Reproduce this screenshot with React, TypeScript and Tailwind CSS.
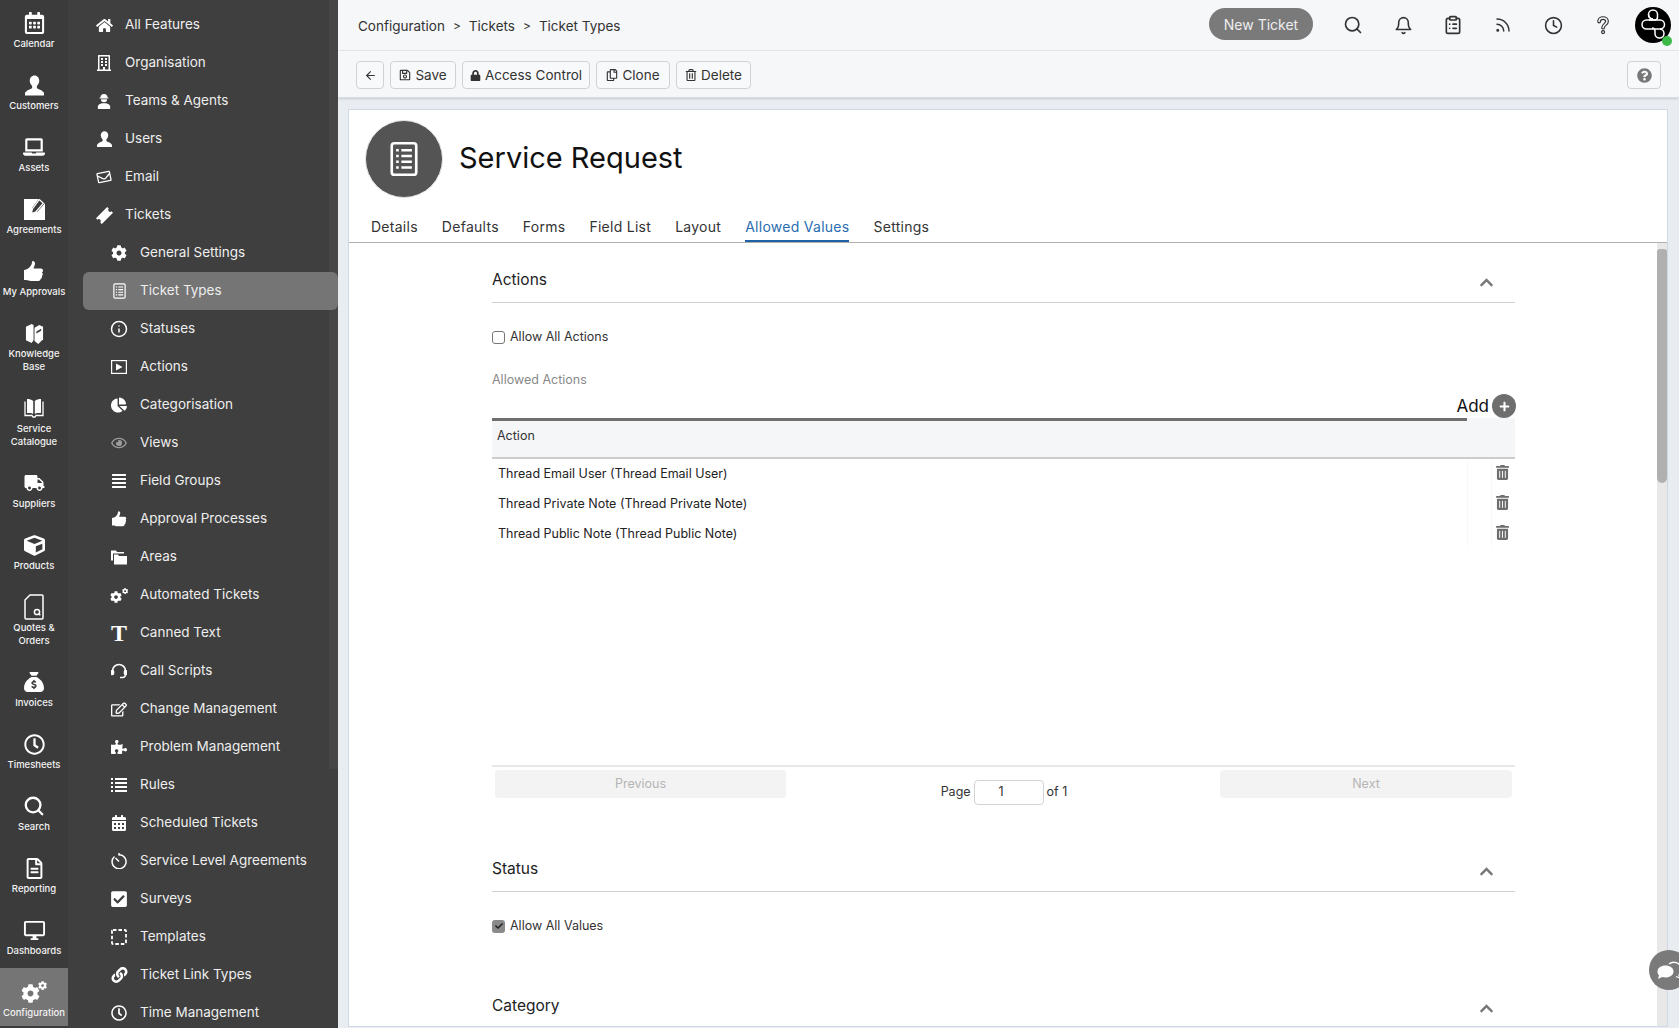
import type { ReactNode } from "react";
import {
  FaCalendarAlt,
  FaChartPie,
  FaCheck,
  FaCheckSquare,
  FaChevronUp,
  FaCog,
  FaAlignJustify,
  FaCube,
  FaHome,
  FaLaptop,
  FaLink,
  FaLock,
  FaPlus,
  FaPuzzlePiece,
  FaQuestionCircle,
  FaRegBuilding,
  FaRegCalendarAlt,
  FaRegClock,
  FaRegCopy,
  FaRegEdit,
  FaRegEnvelope,
  FaRegEye,
  FaRegFileAlt,
  FaRegSave,
  FaTrashAlt,
  FaRegTrashAlt,
  FaTruck,
} from "react-icons/fa";
import { FaSackDollar } from "react-icons/fa6";
import { FiArrowLeft, FiBell, FiClock, FiInfo, FiRss, FiSearch } from "react-icons/fi";
import { LuClipboardList } from "react-icons/lu";
import { MdOutlineDesktopWindows } from "react-icons/md";

const font = { fontFamily: "Inter, 'Noto Sans', sans-serif" };

function GearPair({ big }: { big: number }) {
  return (
    <span className="relative inline-block" style={{ width: big + 4, height: big }}>
      <FaCog className="absolute bottom-0 left-0" style={{ width: big - 3, height: big - 3 }} />
      <FaCog className="absolute right-0 top-0" style={{ width: big / 2.4, height: big / 2.4 }} />
    </span>
  );
}

function ListDoc({ className }: { className: string }) {
  return (
    <svg viewBox="0 0 16 20" className={className} fill="none" stroke="currentColor">
      <rect x="1" y="1" width="14" height="18" rx="1.5" strokeWidth="1.5" />
      <path d="M3.5 5h1.5M6.5 5h6M3.5 8.300h1.500M6.500 8.300h6M3.500 11.600h1.500M6.500 11.600h6M3.500 14.900h1.500M6.500 14.900h6" strokeWidth="1.400" />
    </svg>
  );
}

function BustIcon({ className }: { className: string }) {
  return (
    <svg viewBox="0 0 20 21" className={className} fill="currentColor">
      <path d="M10 0c3 0 5 2.500 5 5.500 0 2.500-1.500 4.500-2.500 5.500v2c0 1 6.500 2 7.500 5.500v2.500H0v-2.500C1 15 7.500 14 7.500 13v-2C6.500 10 5 8 5 5.500 5 2.500 7 0 10 0z" />
    </svg>
  );
}

function ThumbIcon({ className }: { className: string }) {
  return (
    <svg viewBox="0 0 20 21" className={className} fill="currentColor">
      <path d="M9 0c1 0 2 1 2 2.500 0 2-1.500 4-1.500 5h7.500c1.200 0 2 1 2 2s-.5 1.500-1 2c.5.500.8 1 .8 1.800 0 .8-.5 1.400-1 1.700.3.500.4 1 .2 1.600-.2.600-.7 1-1.300 1.200 0 1.200-1 2.200-2.300 2.200H7c-2 0-3-1-5-1H0V9c3.500 0 8-4 8-8 0-.5.5-1 1-1z" />
    </svg>
  );
}

function AgreementIcon() {
  return (
    <svg viewBox="0 0 20 20" className="h-[21px] w-[21px]">
      <path d="M0 0h14l-6 8-1 6 6-2 7-8v16H0z" fill="currentColor" />
      <path d="M14.500 0.500l4 3.500-7.500 8.500-4 1.500 1-4.500z" fill="none" stroke="currentColor" strokeWidth="1.200" />
    </svg>
  );
}

function BooksIcon() {
  return (
    <svg viewBox="0 0 20 22" className="h-[21px] w-[19px]" fill="currentColor">
      <path d="M1 4l6-3 2 1v16l-2 3-6-3z" />
      <path d="M10 5l5-3 4 2v13l-5 5-4-3z" />
      <path d="M12 9l5-3v2l-5 3z" fill="#3b3b3b" />
    </svg>
  );
}

function OpenBookIcon() {
  return (
    <svg viewBox="0 0 20 20" className="h-[21px] w-[20px]">
      <path d="M1 3v14h7l1 1.500h2l1-1.500h7V3" fill="none" stroke="currentColor" strokeWidth="1.300" />
      <path d="M3 .5c2.500 0 4.500.5 6.200 2v13C7.500 14 5.500 14.500 3 14.500zM17 .5c-2.500 0-4.500.5-6.200 2v13c1.700-1.500 3.700-1 6.200-1z" fill="currentColor" />
    </svg>
  );
}

function QuoteIcon() {
  return (
    <svg viewBox="0 0 20 26" className="h-[26px] w-[20px]" fill="none" stroke="currentColor">
      <path d="M6 1h12a1 1 0 0 1 1 1v22a1 1 0 0 1-1 1H2a1 1 0 0 1-1-1V6z" strokeWidth="1.500" />
      <circle cx="13" cy="18" r="2.600" strokeWidth="1.500" />
      <path d="M14.500 19.500l1.800 1.800" strokeWidth="1.500" />
    </svg>
  );
}

function AgentIcon() {
  return (
    <svg viewBox="0 0 16 18" className="h-[16px] w-[14px]" fill="currentColor">
      <path d="M4 5a4 4 0 0 1 8 0h1v1H3V5z" />
      <path d="M4.500 7h7a3.500 3.500 0 0 1-7 0z" />
      <path d="M1 18v-3c0-2 3-3 4.500-3.500h5C12 12 15 13 15 15v3z" />
    </svg>
  );
}

function TicketIcon() {
  return (
    <svg viewBox="0 0 16 16" className="h-[17px] w-[17px]" fill="currentColor">
      <path d="M0 10.500L10.500 0l1.500 1.500a1.500 1.500 0 0 0 2.500 2.500L16 5.500 5.500 16 4 14.500A1.500 1.500 0 0 0 1.500 12z" />
    </svg>
  );
}

function ActionIcon() {
  return (
    <svg viewBox="0 0 16 14" className="h-[14px] w-[16px]">
      <rect x="0.600" y="0.600" width="14.800" height="12.800" fill="none" stroke="currentColor" strokeWidth="1.200" />
      <path d="M5 3.500l6.500 3.500L5 10.500z" fill="currentColor" />
    </svg>
  );
}

function AreasIcon() {
  return (
    <svg viewBox="0 0 16 14" className="h-[15px] w-[16px]" fill="currentColor">
      <path d="M0 0h5l1 1.500h7V3H2v7H0z" />
      <path d="M3 4h4l1 1.500h8V14H3z" />
    </svg>
  );
}

function HeadsetIcon() {
  return (
    <svg viewBox="0 0 16 16" className="h-[16px] w-[16px]" fill="none" stroke="currentColor" strokeWidth="1.600">
      <path d="M1.500 10V8a6.500 6.500 0 0 1 13 0v3a3 3 0 0 1-3 3.500H9" />
      <rect x="0.500" y="7.500" width="2" height="4" rx="1" fill="currentColor" />
      <rect x="13.500" y="7.500" width="2" height="4" rx="1" fill="currentColor" />
    </svg>
  );
}

function RulesIcon() {
  return (
    <svg viewBox="0 0 16 14" className="h-[14px] w-[16px]" fill="currentColor">
      <path d="M0 0h2v2H0zM4 0h12v2H4zM0 4h2v2H0zM4 4h12v2H4zM0 8h2v2H0zM4 8h12v2H4zM0 12h2v2H0zM4 12h12v2H4z" />
    </svg>
  );
}

function SlaIcon() {
  return (
    <svg viewBox="0 0 16 16" className="h-[16px] w-[16px]" fill="none" stroke="currentColor" strokeWidth="1.500">
      <path d="M3.500 3.500A7 7 0 1 0 8 1.800" />
      <path d="M8 0v2.500M4.500 5l3.500 3.500" />
    </svg>
  );
}

function DashedIcon() {
  return (
    <svg viewBox="0 0 16 16" className="h-[16px] w-[16px]" fill="none" stroke="currentColor" strokeWidth="1.800">
      <rect x="1" y="1" width="14" height="14" rx="1" strokeDasharray="3.500 2" />
    </svg>
  );
}

// the ? in the top bar is an outlined shape, so it gets a dark and a light stroke
function HollowQuestion() {
  const d = "M7 7.500C7 5 9 3.500 11.500 3.500S16 5 16 7.500c0 3-4.500 3.500-4.500 7";
  return (
    <svg viewBox="0 0 24 24" className="h-[21px] w-[21px]" fill="none" strokeLinecap="round">
      <path d={d} stroke="#333" strokeWidth="4.400" />
      <path d={d} stroke="#f6f7f9" strokeWidth="1.800" />
      <circle cx="11.500" cy="19.500" r="1.700" stroke="#333" strokeWidth="1.400" />
    </svg>
  );
}

function ChatIcon() {
  return (
    <svg viewBox="0 0 28 22" className="h-[22px] w-[28px]">
      <path d="M14 5a7.500 7.500 0 0 1 12 4 7 7 0 0 1-2 7l1 3-4-1.500" fill="none" stroke="white" strokeWidth="1.300" />
      <path d="M10.500 6.500C15 6.500 18.500 9 18.500 12.500S15 18.500 10.500 18.500c-1.200 0-2.300-.2-3.300-.5L3 20l1-3.600C2.900 15.300 2.500 14 2.500 12.500 2.500 9 6 6.500 10.500 6.500z" fill="white" />
    </svg>
  );
}

const railItems: { label: string[]; icon: ReactNode; active?: boolean }[] = [
  { label: ["Calendar"], icon: <FaRegCalendarAlt className="h-[22px] w-[21px]" /> },
  { label: ["Customers"], icon: <BustIcon className="h-[21px] w-[19px]" /> },
  { label: ["Assets"], icon: <FaLaptop className="h-[20px] w-[22px]" /> },
  { label: ["Agreements"], icon: <AgreementIcon /> },
  { label: ["My Approvals"], icon: <ThumbIcon className="h-[21px] w-[20px]" /> },
  { label: ["Knowledge", "Base"], icon: <BooksIcon /> },
  { label: ["Service", "Catalogue"], icon: <OpenBookIcon /> },
  { label: ["Suppliers"], icon: <FaTruck className="h-[16px] w-[21px]" /> },
  { label: ["Products"], icon: <FaCube className="h-[21px] w-[21px]" /> },
  { label: ["Quotes &", "Orders"], icon: <QuoteIcon /> },
  { label: ["Invoices"], icon: <FaSackDollar className="h-[20px] w-[20px]" /> },
  { label: ["Timesheets"], icon: <FaRegClock className="h-[21px] w-[21px]" /> },
  { label: ["Search"], icon: <FiSearch className="h-[22px] w-[22px]" strokeWidth={2.500} /> },
  { label: ["Reporting"], icon: <FaRegFileAlt className="h-[21px] w-[17px]" /> },
  { label: ["Dashboards"], icon: <MdOutlineDesktopWindows className="h-[23px] w-[23px]" /> },
  { label: ["Configuration"], icon: <GearPair big={22} />, active: true },
];

const navItems: { label: string; icon: ReactNode; child?: boolean; active?: boolean; dim?: boolean }[] = [
  { label: "All Features", icon: <FaHome className="h-[15px] w-[17px]" /> },
  { label: "Organisation", icon: <FaRegBuilding className="h-[16px] w-[16px]" /> },
  { label: "Teams & Agents", icon: <AgentIcon /> },
  { label: "Users", icon: <BustIcon className="h-[16px] w-[15px]" /> },
  { label: "Email", icon: <FaRegEnvelope className="h-[14px] w-[16px] -rotate-12" /> },
  { label: "Tickets", icon: <TicketIcon /> },
  { label: "General Settings", child: true, icon: <FaCog className="h-[16px] w-[16px]" /> },
  { label: "Ticket Types", child: true, active: true, icon: <ListDoc className="h-[16px] w-[13px]" /> },
  { label: "Statuses", child: true, icon: <FiInfo className="h-[18px] w-[18px]" /> },
  { label: "Actions", child: true, icon: <ActionIcon /> },
  { label: "Categorisation", child: true, icon: <FaChartPie className="h-[16px] w-[16px]" /> },
  { label: "Views", child: true, dim: true, icon: <FaRegEye className="h-[14px] w-[16px]" /> },
  { label: "Field Groups", child: true, icon: <FaAlignJustify className="h-[16px] w-[16px]" /> },
  { label: "Approval Processes", child: true, icon: <ThumbIcon className="h-[16px] w-[15px]" /> },
  { label: "Areas", child: true, icon: <AreasIcon /> },
  { label: "Automated Tickets", child: true, icon: <GearPair big={15} /> },
  {
    label: "Canned Text",
    child: true,
    icon: <span className="text-[24px] font-bold leading-none" style={{ fontFamily: "'Liberation Serif', serif" }}>T</span>,
  },
  { label: "Call Scripts", child: true, icon: <HeadsetIcon /> },
  { label: "Change Management", child: true, icon: <FaRegEdit className="h-[15px] w-[16px]" /> },
  { label: "Problem Management", child: true, icon: <FaPuzzlePiece className="h-[16px] w-[16px]" /> },
  { label: "Rules", child: true, icon: <RulesIcon /> },
  { label: "Scheduled Tickets", child: true, icon: <FaCalendarAlt className="h-[16px] w-[16px]" /> },
  { label: "Service Level Agreements", child: true, icon: <SlaIcon /> },
  { label: "Surveys", child: true, icon: <FaCheckSquare className="h-[18px] w-[18px]" /> },
  { label: "Templates", child: true, icon: <DashedIcon /> },
  { label: "Ticket Link Types", child: true, icon: <FaLink className="h-[16px] w-[17px]" /> },
  { label: "Time Management", child: true, icon: <FaRegClock className="h-[16px] w-[16px]" /> },
];

const topIcons = [
  <FiSearch key="search" className="h-[20px] w-[20px]" />,
  <FiBell key="bell" className="h-[19px] w-[19px]" />,
  <LuClipboardList key="clip" className="h-[20px] w-[20px]" />,
  <FiRss key="rss" className="h-[18px] w-[18px]" />,
  <FiClock key="clock" className="h-[19px] w-[19px]" />,
  <HollowQuestion key="help" />,
];

const tabs = ["Details", "Defaults", "Forms", "Field List", "Layout", "Allowed Values", "Settings"];
const rows = [
  "Thread Email User (Thread Email User)",
  "Thread Private Note (Thread Private Note)",
  "Thread Public Note (Thread Public Note)",
];

function ToolButton({ children, className = "" }: { children: ReactNode; className?: string }) {
  return (
    <button className={`flex h-[28px] items-center justify-center gap-1 rounded border border-[#d2d2d2] bg-[#f8f9fa] text-[13.500px] text-[#333] ${className}`}>
      {children}
    </button>
  );
}

function SectionHeader({ title }: { title: string }) {
  return (
    <div className="flex h-[44px] items-center justify-between border-b border-[#d0d0d0] pr-[21px]">
      <span className="pb-[2px] text-[15.500px] text-[#222]">{title}</span>
      <FaChevronUp className="mt-[3px] h-[15px] w-[15px] text-[#777]" />
    </div>
  );
}

export default function App() {
  return (
    <div className="relative flex h-screen w-full overflow-hidden bg-[#e9edf1]" style={font}>
      <div className="flex w-[68px] shrink-0 flex-col overflow-hidden bg-[#3b3b3b] text-white">
        {railItems.map((item) => (
          <div
            key={item.label[0]}
            className={`mb-[4px] flex shrink-0 flex-col items-center pt-[12px] first:mt-[-1px] ${
              item.label.length > 1 ? "h-[71px]" : "h-[58px]"
            } ${item.active ? "bg-[#757575]" : ""}`}
          >
            <div className="flex h-[24px] items-center justify-center">{item.icon}</div>
            <div className="mt-[2px] text-center text-[9.500px] font-medium leading-[13px] text-[#f2f2f2]">
              {item.label.map((line) => (
                <div key={line}>{line}</div>
              ))}
            </div>
          </div>
        ))}
      </div>

      <div className="relative w-[270px] shrink-0 overflow-hidden bg-[#3f3f3f] pl-[15px] pt-[6px]">
        <div className="absolute right-0 top-0 h-[769px] w-[9px] bg-[#464646]" />
        {navItems.map((item) => (
          <div
            key={item.label}
            className={`relative flex h-[38px] items-center rounded-l-md text-[13.500px] ${
              item.active ? "rounded-md bg-[#757575]" : ""
            } ${item.child ? "pl-[26px]" : "pl-[11px]"} text-[#eeeeee]`}
          >
            <span className={`flex w-[20px] shrink-0 justify-center ${item.dim ? "text-[#9a9a9a]" : "text-white"}`}>{item.icon}</span>
            <span className="ml-[11px] pb-[1px]">{item.label}</span>
          </div>
        ))}
      </div>

      <div className="flex min-w-0 flex-1 flex-col">
        <div className="flex h-[51px] shrink-0 items-center border-b border-[#e7e9ec] bg-[#f6f7f9] pl-[20px] pr-[8px] text-[13.500px] text-[#333]">
          <div className="flex items-center pt-[2px]">
            <span>Configuration</span>
            <span className="mx-[8px] text-[12px]">&gt;</span>
            <span>Tickets</span>
            <span className="mx-[8px] text-[12px]">&gt;</span>
            <span>Ticket Types</span>
          </div>
          <button className="ml-auto mr-[15px] mt-[-2px] h-[32px] w-[104px] rounded-full bg-[#7a7a7a] text-[14px] text-[#eeeeee]">New Ticket</button>
          <div className="flex items-center text-[#333]">
            {topIcons.map((icon) => (
              <span key={icon.key} className="flex w-[50px] justify-center">
                {icon}
              </span>
            ))}
          </div>
          <div className="relative ml-[7px] h-[36px] w-[36px] rounded-full bg-black">
            <svg viewBox="0 0 36 36" className="h-full w-full" fill="none" stroke="white" strokeWidth="1.500">
              <path d="M18 12a4.500 4.500 0 1 1 4.500-4.500V10a3 3 0 0 1-3 3h-8a4.500 4.500 0 0 0 0 9h13a4.500 4.500 0 0 1 0 9 4.500 4.500 0 0 1-4.500-4.500V24a3 3 0 0 0-3-3" />
              <path d="M18 12a4.500 4.500 0 0 1-4.500-4.500M14 13h11a4.500 4.500 0 0 1 0 9" />
            </svg>
            <span className="absolute bottom-[-3px] right-[-1px] h-[10px] w-[10px] rounded-full bg-[#3cb947]" />
          </div>
        </div>

        <div className="flex h-[47px] shrink-0 items-center gap-[6px] border-b border-[#d8dde3] bg-[#f6f7f9] pl-[18px] pr-[18px] pt-[2px] shadow-sm">
          <ToolButton className="w-[28px]">
            <FiArrowLeft className="h-[13px] w-[13px]" />
          </ToolButton>
          <ToolButton className="w-[66px]">
            <FaRegSave className="h-[12px] w-[12px]" /> Save
          </ToolButton>
          <ToolButton className="w-[128px]">
            <FaLock className="h-[11px] w-[11px]" /> Access Control
          </ToolButton>
          <ToolButton className="w-[74px]">
            <FaRegCopy className="h-[12px] w-[12px]" /> Clone
          </ToolButton>
          <ToolButton className="w-[75px]">
            <FaRegTrashAlt className="h-[12px] w-[12px]" /> Delete
          </ToolButton>
          <ToolButton className="ml-auto w-[34px]">
            <FaQuestionCircle className="h-[15px] w-[15px] text-[#777]" />
          </ToolButton>
        </div>

        <div className="min-h-0 flex-1 pl-[10px] pr-[11px] pt-[11px]">
          <div className="flex h-[918px] flex-col overflow-hidden border border-[#d0d9e3] bg-white">
            <div className="flex shrink-0 items-center pl-[16px] pt-[10px]">
              <div className="flex h-[78px] w-[78px] items-center justify-center rounded-full border border-[#e4e4e4] bg-[#545454] text-white">
                <ListDoc className="h-[36px] w-[28px]" />
              </div>
              <h1 className="ml-[16px] mt-[-3px] text-[29px] leading-none text-[#111]">Service Request</h1>
            </div>

            <div className="mt-[14px] flex h-[31px] shrink-0 gap-[24px] border-b border-[#b0b0b0] pl-[22px]">
              {tabs.map((tab) => (
                <div
                  key={tab}
                  className={`h-[30px] pt-[4px] text-[14px] tracking-[0.270px] ${
                    tab === "Allowed Values" ? "border-b-2 border-[#1f62a5] text-[#2a6db0]" : "text-[#333]"
                  }`}
                >
                  {tab}
                </div>
              ))}
            </div>

            <div className="flex min-h-0 flex-1">
              <div className="min-w-0 flex-1 overflow-hidden pl-[143px] pt-[16px]">
                <div className="w-[1023px]">
                  <SectionHeader title="Actions" />
                  <label className="mt-[26px] flex h-[16px] items-center gap-[5px] text-[12.500px] text-[#333]">
                    <span className="h-[13px] w-[13px] rounded-[3px] border border-[#777] bg-white" />
                    Allow All Actions
                  </label>
                  <div className="mt-[27px] h-[16px] text-[12.500px] leading-[16px] text-[#8a8a8a]">Allowed Actions</div>
                  <div className="-mr-px mt-[6px] flex h-[24px] items-center justify-end gap-[3px]">
                    <span className="pt-[2px] text-[17px] text-[#111]">Add</span>
                    <span className="flex h-[24px] w-[24px] items-center justify-center rounded-full bg-[#6e6e6e] text-white">
                      <FaPlus className="h-[11px] w-[11px]" />
                    </span>
                  </div>
                  <div className="h-[41px] border-b-2 border-[#cccccc] bg-[#f5f6f8]">
                    <div className="h-[3px] w-[975px] bg-[#6f6f6f]" />
                    <div className="pl-[5px] pt-[6px] text-[12.500px] text-[#333]">Action</div>
                  </div>
                  <div className="h-[306px]">
                    {rows.map((row) => (
                      <div key={row} className="flex h-[30px] items-center text-[12.500px] text-[#222]">
                        <span className="w-[975px] pl-[6px]">{row}</span>
                        <span className="h-full w-[24px] border-l border-[#f9f9f9]" />
                        <span className="flex h-full w-[22px] items-center justify-center border-l border-[#f9f9f9] pb-[3px] text-[#6e6e6e]">
                          <FaTrashAlt className="h-[15px] w-[13px]" />
                        </span>
                      </div>
                    ))}
                  </div>
                  <div className="h-[83px] border-t-2 border-[#e8e8e8] px-[3px] pt-[3px]">
                    <div className="flex items-start">
                      <button className="h-[28px] w-[291px] rounded bg-[#f3f3f3] text-[12.500px] text-[#b5b5b5]">Previous</button>
                      <div className="flex flex-1 items-center justify-center gap-[3px] pl-[2px] pt-[10px] text-[12.500px] text-[#333]">
                        <span>Page</span>
                        <span className="flex h-[25px] w-[70px] items-center rounded border border-[#d2d2d2] pl-[24px] text-[#333]">1</span>
                        <span>of 1</span>
                      </div>
                      <button className="h-[28px] w-[292px] rounded bg-[#f3f3f3] text-[12.500px] text-[#b5b5b5]">Next</button>
                    </div>
                  </div>
                  <SectionHeader title="Status" />
                  <label className="mt-[26px] flex h-[16px] items-center gap-[5px] text-[12.500px] text-[#333]">
                    <span className="flex h-[13px] w-[13px] items-center justify-center rounded-[3px] bg-[#8a8a8a] text-[#222]">
                      <FaCheck className="h-[8px] w-[8px]" />
                    </span>
                    Allow All Values
                  </label>
                  <div className="mt-[51px]">
                    <SectionHeader title="Category" />
                  </div>
                </div>
              </div>
              <div className="w-[10px] shrink-0 bg-[#e8e8e8] pt-[6px]">
                <div className="h-[234px] rounded-b-md rounded-t-sm bg-[#b0b0b0]" />
              </div>
            </div>
          </div>
        </div>
      </div>

      <div className="absolute right-[-10px] top-[950px] flex h-[40px] w-[40px] items-center justify-center overflow-hidden rounded-full bg-[#7a7a7a]">
        <ChatIcon />
      </div>
    </div>
  );
}
